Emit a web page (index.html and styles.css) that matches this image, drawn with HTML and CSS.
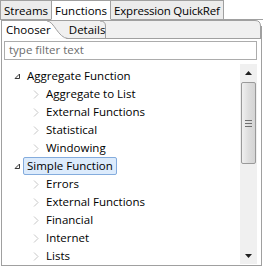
FILE: index.html
```html
<!DOCTYPE html>
<html>
<head>
<meta charset="utf-8">
<link rel="stylesheet" href="styles.css">
</head>
<body>
<div class="tabs">
  <div class="tab">Streams</div>
  <div class="tab active">Functions</div>
  <div class="tab tight">Expression QuickRef</div>
  <div class="tab-fill"></div>
</div>
<div class="panel">
  <div class="subtabs">
    <svg class="subtabs-bg" width="259" height="19" viewBox="0 0 259 19">
      <path d="M0 19 L0 0.5 L253 0.5 Q258.5 0.5 258.5 6 L258.5 19 Z" fill="#f0f0f0" stroke="none"/>
      <path d="M64 18.5 L258.5 18.5" stroke="#a0a0a0" fill="none"/>
      <path d="M0 0.5 L253 0.5 Q258.5 0.5 258.5 6 L258.5 19" stroke="#a0a0a0" fill="none"/>
      <path d="M0 19 L0 1 L45 1 C52 1 56 18 66 18.5 L0 19 Z" fill="#ffffff"/>
      <path d="M45 1 C52 1 56 18 66 18.5" stroke="#a0a0a0" fill="none"/>
      <path d="M98 1 Q103.5 1 103.5 6 L103.5 18.5" stroke="#a0a0a0" fill="none"/>
    </svg>
    <div class="subtab active">Chooser</div>
    <div class="subtab">Details</div>
  </div>
  <div class="filter">type filter text</div>
  <div class="tree-area">
    <div class="tree">
      <div class="row l1"><span class="twisty"><svg width="7" height="7" viewBox="0 0 7 7"><path d="M5.5 1 L5.5 5.5 L1 5.5 Z" fill="#fff" stroke="#3a3a3a"/></svg></span><span class="label">Aggregate Function</span></div>
      <div class="row l2"><span class="twisty"><svg width="6" height="9" viewBox="0 0 6 9"><path d="M1 0.5 L5 4.5 L1 8.5" fill="none" stroke="#c6c6c6"/></svg></span><span class="label">Aggregate to List</span></div>
      <div class="row l2"><span class="twisty"><svg width="6" height="9" viewBox="0 0 6 9"><path d="M1 0.5 L5 4.5 L1 8.5" fill="none" stroke="#c6c6c6"/></svg></span><span class="label">External Functions</span></div>
      <div class="row l2"><span class="twisty"><svg width="6" height="9" viewBox="0 0 6 9"><path d="M1 0.5 L5 4.5 L1 8.5" fill="none" stroke="#c6c6c6"/></svg></span><span class="label">Statistical</span></div>
      <div class="row l2"><span class="twisty"><svg width="6" height="9" viewBox="0 0 6 9"><path d="M1 0.5 L5 4.5 L1 8.5" fill="none" stroke="#c6c6c6"/></svg></span><span class="label">Windowing</span></div>
      <div class="row l1"><span class="twisty"><svg width="7" height="7" viewBox="0 0 7 7"><path d="M5.5 1 L5.5 5.5 L1 5.5 Z" fill="#fff" stroke="#3a3a3a"/></svg></span><span class="label selected">Simple Function</span></div>
      <div class="row l2"><span class="twisty"><svg width="6" height="9" viewBox="0 0 6 9"><path d="M1 0.5 L5 4.5 L1 8.5" fill="none" stroke="#c6c6c6"/></svg></span><span class="label">Errors</span></div>
      <div class="row l2"><span class="twisty"><svg width="6" height="9" viewBox="0 0 6 9"><path d="M1 0.5 L5 4.5 L1 8.5" fill="none" stroke="#c6c6c6"/></svg></span><span class="label">External Functions</span></div>
      <div class="row l2"><span class="twisty"><svg width="6" height="9" viewBox="0 0 6 9"><path d="M1 0.5 L5 4.5 L1 8.5" fill="none" stroke="#c6c6c6"/></svg></span><span class="label">Financial</span></div>
      <div class="row l2"><span class="twisty"><svg width="6" height="9" viewBox="0 0 6 9"><path d="M1 0.5 L5 4.5 L1 8.5" fill="none" stroke="#c6c6c6"/></svg></span><span class="label">Internet</span></div>
      <div class="row l2"><span class="twisty"><svg width="6" height="9" viewBox="0 0 6 9"><path d="M1 0.5 L5 4.5 L1 8.5" fill="none" stroke="#c6c6c6"/></svg></span><span class="label">Lists</span></div>
    </div>
    <div class="scrollbar">
      <div class="sb-btn"><svg width="7" height="4" viewBox="0 0 7 4"><path d="M3.5 0 L7 4 L0 4 Z" fill="#202020"/></svg></div>
      <div class="sb-track">
        <div class="thumb">
          <svg width="7" height="7" viewBox="0 0 7 7"><path d="M0 0.5 H7 M0 3.5 H7 M0 6.5 H7" stroke="#707070"/></svg>
        </div>
      </div>
      <div class="sb-btn"><svg width="7" height="4" viewBox="0 0 7 4"><path d="M0 0 L7 0 L3.5 4 Z" fill="#202020"/></svg></div>
    </div>
  </div>
</div>
</body>
</html>
```
FILE: styles.css
```css
html, body {
  margin: 0;
  padding: 0;
  background: #ffffff;
}
body {
  font-family: "Open Sans", "Noto Sans", sans-serif;
  font-size: 11.5px;
  color: #000;
  width: 263px;
  height: 267px;
  overflow: hidden;
}
.tabs {
  display: flex;
  height: 20px;
  box-sizing: border-box;
}
.tab {
  box-sizing: border-box;
  height: 20px;
  padding: 1px 3px 0 3px;
  background: #ececec;
  border: 1px solid #a0a0a0;
  border-left: none;
  line-height: 17px;
  white-space: nowrap;
}
.tab.tight {
  letter-spacing: -0.2px;
}
.tab:first-child {
  border-left: 1px solid #a0a0a0;
}
.tab.active {
  background: #ffffff;
  border-bottom-color: #ffffff;
  border-left: 1px solid #a0a0a0;
  margin-left: -1px;
}
.tab-fill {
  flex: 1;
  border-bottom: 1px solid #a0a0a0;
}
.panel {
  margin-left: 1px;
  width: 261px;
  height: 246px;
  box-sizing: border-box;
  border: 1px solid #a0a0a0;
  border-top: none;
  border-right: none;
  display: flex;
  flex-direction: column;
  position: relative;
}
.panel::after {
  content: "";
  position: absolute;
  right: 0;
  top: 6px;
  bottom: 0;
  border-right: 1px solid #a0a0a0;
}
.subtabs {
  position: relative;
  height: 19px;
  display: flex;
  align-items: flex-end;
}
.subtabs-bg {
  position: absolute;
  left: 0;
  top: 0;
}
.subtab {
  position: relative;
  line-height: 16px;
  height: 17px;
  white-space: nowrap;
}
.subtab.active {
  margin-left: 4px;
}
.subtab:nth-child(3) {
  margin-left: 18px;
}
.filter {
  margin: 2px 5px 0 2px;
  height: 19px;
  box-sizing: border-box;
  border: 1px solid #acacac;
  color: #6d6d6d;
  padding-left: 4px;
  line-height: 16px;
}
.tree-area {
  flex: 1;
  display: flex;
  min-height: 0;
}
.tree {
  flex: 1;
  padding-top: 7px;
  overflow: hidden;
}
.row {
  height: 18px;
  display: flex;
  align-items: center;
  white-space: nowrap;
}
.row.l1 { padding-left: 9px; }
.row.l2 { padding-left: 28px; }
.twisty {
  width: 12px;
  height: 18px;
  display: flex;
  align-items: center;
  justify-content: center;
}
.label {
  padding: 0 3px;
  border: 1px solid transparent;
  border-radius: 2px;
  line-height: 16px;
}
.selected {
  background: #dcebfc;
  border-color: #84acdd;
}
.scrollbar {
  width: 17px;
  margin: 4px 5px 1px 0;
  background: #f0f0f0;
  display: flex;
  flex-direction: column;
}
.sb-btn {
  height: 17px;
  display: flex;
  align-items: center;
  justify-content: center;
}
.sb-track {
  flex: 1;
  display: flex;
  flex-direction: column;
}
.thumb {
  margin: 1px 0 0 1px;
  width: 15px;
  height: 82px;
  box-sizing: border-box;
  border: 1px solid #9a9a9a;
  border-radius: 2px;
  background: linear-gradient(to right, #f0f0f0, #dedede 50%, #d4d4d4);
  display: flex;
  align-items: center;
  justify-content: center;
}
```
